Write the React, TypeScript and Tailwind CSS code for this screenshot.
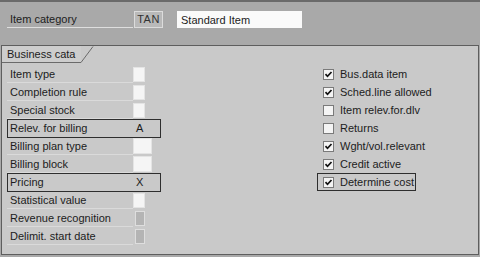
import React from 'react';

type LeftRow = {
  label: string;
  value?: string;
  boxed?: boolean;
  field: 'short' | 'wide' | 'gray' | 'none';
};

const leftRows: LeftRow[] = [
  { label: 'Item type', field: 'short' },
  { label: 'Completion rule', field: 'short' },
  { label: 'Special stock', field: 'short' },
  { label: 'Relev. for billing', value: 'A', boxed: true, field: 'none' },
  { label: 'Billing plan type', field: 'wide' },
  { label: 'Billing block', field: 'wide' },
  { label: 'Pricing', value: 'X', boxed: true, field: 'none' },
  { label: 'Statistical value', field: 'short' },
  { label: 'Revenue recognition', field: 'gray' },
  { label: 'Delimit. start date', field: 'gray' },
];

const rightRows = [
  { label: 'Bus.data item', checked: true },
  { label: 'Sched.line allowed', checked: true },
  { label: 'Item relev.for.dlv', checked: false },
  { label: 'Returns', checked: false },
  { label: 'Wght/vol.relevant', checked: true },
  { label: 'Credit active', checked: true },
  { label: 'Determine cost', checked: true, boxed: true },
];

const CheckBox: React.FC<{ checked: boolean }> = ({ checked }) => (
  <div className="w-[11px] h-[11px] bg-[#f4f4f4] border border-[#7a7a7a] flex items-center justify-center">
    {checked && (
      <svg width="9" height="9" viewBox="0 0 9 9">
        <path d="M1.5 4.2 L3.5 6.3 L7.5 2" fill="none" stroke="#111" strokeWidth="1.7" />
      </svg>
    )}
  </div>
);

const Field: React.FC<{ kind: LeftRow['field'] }> = ({ kind }) => {
  if (kind === 'short') return <div className="w-[12px] h-[15px] bg-[#f5f5f5] border border-[#e4e4e4]" />;
  if (kind === 'wide') return <div className="w-[19px] h-[16px] bg-[#f5f5f5] border border-[#e4e4e4]" />;
  if (kind === 'gray') return <div className="ml-[2px] w-[10px] h-[15px] bg-[#b4b4b4] border border-[#dedede]" />;
  return null;
};

export default function App() {
  return (
    <div className="w-[480px] h-[257px] bg-[#a9a9a9] border-t-2 border-[#6a6a6a] overflow-hidden text-[11px] text-[#1c1c1c] font-['Liberation_Sans',Arial,sans-serif]">
      {/* Header */}
      <div className="flex items-center mt-[9px] h-[17px]">
        <div className="ml-[7px] w-[126px] h-[17px] border-b border-[#dedede] pl-[3px] pt-[1px] flex items-center">
          Item category
        </div>
        <div className="ml-[1px] w-[29px] h-[17px] bg-[#b9b9b9] border border-[#dcdcdc] flex items-center justify-center tracking-[0.5px] text-[#333]">
          TAN
        </div>
        <div className="ml-[14px] w-[125px] h-[17px] bg-[#fafafa] pl-[4px] pt-[1px] flex items-center">
          Standard Item
        </div>
      </div>

      {/* Panel */}
      <div className="mt-[17px] ml-[1px] w-[478px] h-[210px] bg-[#c9c9c9] border border-[#5e5e5e]">
        <div className="flex h-[17px]">
          <div className="w-[79px] h-[17px] border-b border-[#6a6a6a] pl-[5px] flex items-center bg-[#cdcdcd] whitespace-nowrap">
            Business cata
          </div>
          <svg width="13" height="17" viewBox="0 0 13 17">
            <path d="M0 16.5 L12 0.5" stroke="#6a6a6a" strokeWidth="1" fill="none" />
          </svg>
        </div>

        <div className="flex mt-[2px]">
          {/* Left column */}
          <div className="ml-[5px] flex flex-col">
            {leftRows.map((r) => (
              <div key={r.label} className="h-[18px] flex items-center">
                {r.boxed ? (
                  <div className="w-[154px] h-[19px] border border-[#2e2e2e] flex items-center">
                    <div className="w-[127px] pl-[2px]">{r.label}</div>
                    <div className="ml-[1px]">{r.value}</div>
                  </div>
                ) : (
                  <>
                    <div className="w-[126px] h-[17px] border-b border-[#dadada] pl-[3px] pt-[1px] flex items-center whitespace-nowrap">
                      {r.label}
                    </div>
                    <Field kind={r.field} />
                  </>
                )}
              </div>
            ))}
          </div>

          {/* Right column */}
          <div className="ml-[156px] flex flex-col">
            {rightRows.map((r) =>
              r.boxed ? (
                <div key={r.label} className="h-[18px] w-[99px] border border-[#2e2e2e] flex items-center pl-[5px] gap-[6px]">
                  <CheckBox checked={r.checked} />
                  <span>{r.label}</span>
                </div>
              ) : (
                <div key={r.label} className="h-[18px] flex items-center pl-[6px] gap-[6px]">
                  <CheckBox checked={r.checked} />
                  <span>{r.label}</span>
                </div>
              )
            )}
          </div>
        </div>
      </div>
    </div>
  );
}
